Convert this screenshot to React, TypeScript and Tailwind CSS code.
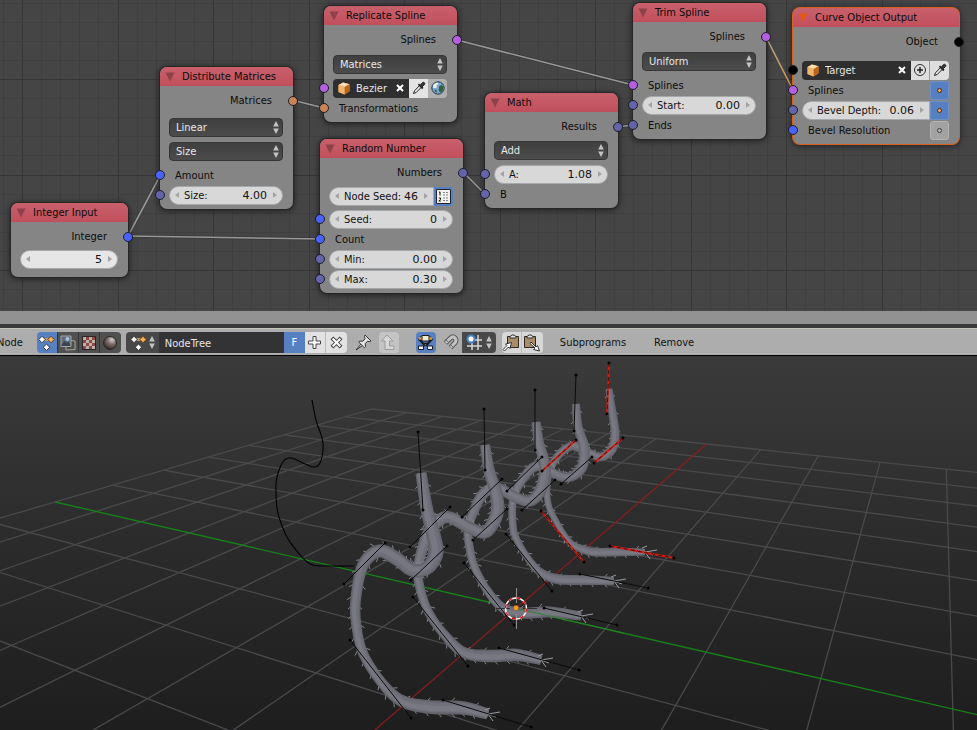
import { useId, type ReactNode } from "react";

/* ------------------------------------------------------------------ */
/* Node editor                                                         */
/* ------------------------------------------------------------------ */

type SocketKind = "integer" | "float" | "spline" | "matrix" | "object";

const SOCKET_COLORS: Record<SocketKind, string> = {
  integer: "bg-[#4a63ff]",
  float: "bg-[#6464aa]",
  spline: "bg-[#b45fe0]",
  matrix: "bg-[#c98355]",
  object: "bg-black",
};

function Socket({ kind, side }: { kind: SocketKind; side: "left" | "right" }) {
  return (
    <span
      className={`absolute top-1/2 z-10 size-[10px] -translate-y-1/2 rounded-full border border-[#1c1c24] ${
        side === "left" ? "-left-[5px]" : "-right-[5px]"
      } ${SOCKET_COLORS[kind]}`}
    />
  );
}

function Node({
  title,
  place,
  selected = false,
  children,
}: {
  title: string;
  place: string;
  selected?: boolean;
  children: ReactNode;
}) {
  return (
    <section
      className={`absolute flex flex-col rounded-[7px] bg-[#858585] pb-1 shadow-[0_1px_6px_1px_rgba(0,0,0,0.55)] ring-1 ${
        selected ? "ring-[#d9601f]" : "ring-[#262626]"
      } ${place}`}
    >
      <header className="flex h-[19px] items-center gap-[7px] rounded-t-[7px] bg-linear-to-b from-[#c8606b] to-[#c04f5c] pt-px pl-[5px]">
        <svg viewBox="0 0 10 10" className={`size-[10px] ${selected ? "fill-[#e4571c]" : "fill-[#8e4149]"}`}>
          <path d="M0.5 0.5h9L5 9.5z" />
        </svg>
        <h2>{title}</h2>
      </header>
      <div className="flex flex-col pt-[5px]">{children}</div>
    </section>
  );
}

function Output({ label, kind }: { label: string; kind: SocketKind }) {
  return (
    <div className="relative flex h-5 items-center justify-end pr-[21px]">
      {label}
      <Socket kind={kind} side="right" />
    </div>
  );
}

function Row({ kind, gap = "", children }: { kind?: SocketKind; gap?: string; children: ReactNode }) {
  return (
    <div className={`relative flex h-5 items-center pr-[10px] pl-[9px] ${gap}`}>
      {kind && <Socket kind={kind} side="left" />}
      {children}
    </div>
  );
}

function Plain({ children }: { children: ReactNode }) {
  return <span className="grow pt-[2px] pl-[6px]">{children}</span>;
}

function UpDown() {
  return (
    <svg viewBox="0 0 6 13" className="pointer-events-none h-[13px] w-[6px] fill-[#c4c4c4]">
      <path d="M3 0l2.8 5.5H.2zM3 13L.2 7.5h5.6z" />
    </svg>
  );
}

function Choice({ name, value }: { name: string; value: string }) {
  return (
    <label className="relative flex h-[19px] w-full items-center rounded-[4px] border border-[#363636] bg-linear-to-b from-[#3f3f3f] to-[#4c4c4c] text-[#e9e9e9]">
      <select aria-label={name} defaultValue={value} className="w-full appearance-none pt-[2px] pl-[6px] outline-none">
        <option>{value}</option>
      </select>
      <span className="absolute right-[3px]">
        <UpDown />
      </span>
    </label>
  );
}

function NumberField({
  label,
  value,
  name,
  tone = "bg-[#d8d8d8]",
  joined = false,
}: {
  label?: string;
  value: string;
  name?: string;
  tone?: string;
  joined?: boolean;
}) {
  const id = useId();
  return (
    <div
      className={`flex h-[19px] min-w-0 grow items-center border border-[#a5a9ab] px-[5px] text-[#111] ${tone} ${
        joined ? "rounded-l-full" : "rounded-full"
      }`}
    >
      <svg viewBox="0 0 4 6" className="h-[6px] w-[4px] shrink-0 fill-[#a3a3a3]">
        <path d="M4 0v6L0 3z" />
      </svg>
      {label && (
        <label htmlFor={id} className="shrink-0 pt-px pl-[5px]">
          {label}
        </label>
      )}
      <input
        id={id}
        aria-label={name}
        defaultValue={value}
        className="w-0 min-w-0 grow bg-transparent pt-[2px] pr-[6px] text-right font-['DejaVu_Sans',sans-serif] outline-none"
      />
      <svg viewBox="0 0 4 6" className="h-[6px] w-[4px] shrink-0 fill-[#a3a3a3]">
        <path d="M0 0v6l4-3z" />
      </svg>
    </div>
  );
}

function CubeIcon() {
  return (
    <svg viewBox="0 0 12 13" className="h-[13px] w-[12px] shrink-0">
      <path d="M.5 3L5 .5l6.5 1.8v7L6.5 12.5.5 10z" fill="#e9953f" />
      <path d="M.5 3L5 .5l6.5 1.8-5 2.7z" fill="#fbe0b4" />
      <path d="M6.5 5l5-2.7v7l-5 3.2z" fill="#b9651d" />
      <path d="M.5 3l6 2v7.5L.5 10z" fill="#f0b46f" />
    </svg>
  );
}

function CloseIcon() {
  return (
    <svg viewBox="0 0 8 8" className="size-[8px]">
      <path d="M1 1l6 6M7 1L1 7" stroke="#fff" strokeWidth="2" />
    </svg>
  );
}

function EyedropperIcon() {
  return (
    <svg viewBox="0 0 14 14" className="size-[14px]" fill="none">
      <path d="M1.500 12.500l1-2.700 5-5.200 1.800 1.700-5.100 5.200z" fill="#e8e8e8" stroke="#222" />
      <path d="M6.500 3.200l4.300 4.300" stroke="#222" strokeWidth="1.800" />
      <path d="M8.500 5.500L8 4.500 10.300 1.800c.8-.9 1.700-.5 2.100-.1.500.5.700 1.200 0 2L9.800 6z" fill="#3a3a3a" stroke="#222" />
    </svg>
  );
}

function GlobeIcon() {
  return (
    <svg viewBox="0 0 14 14" className="size-[14px]">
      <circle cx="7" cy="7" r="6.2" fill="#7ba4d0" stroke="#26384f" />
      <path d="M2.500 3.500c1.500-1.500 3-2 4.500-1.800l.5 1.600-2 1 .4 1.600-1.800 1.400-2.200-.6z" fill="#e8f0e4" />
      <path d="M8 5.500l2.500-1.800 2 2.500-.8 3.500-2.500 2-1.500-2.500z" fill="#33623a" />
      <path d="M3.500 8.500l2 .6.2 2.700-1.500-.8z" fill="#33623a" />
    </svg>
  );
}

function ObjectField({ value, name }: { value: string; name: string }) {
  return (
    <div className="flex h-[19px] min-w-0 grow items-center rounded-l-[4px] bg-[#2f2f2f] pr-[5px] pl-[5px] text-[#e6e6e6]">
      <CubeIcon />
      <input
        aria-label={name}
        defaultValue={value}
        className="w-0 min-w-0 grow bg-transparent pt-[2px] pl-[6px] outline-none"
      />
      <button aria-label={`Clear ${name}`}>
        <CloseIcon />
      </button>
    </div>
  );
}

function SquareButton({ label, look, children }: { label: string; look: string; children: ReactNode }) {
  return (
    <button aria-label={label} className={`flex h-[19px] w-[19px] shrink-0 items-center justify-center ${look}`}>
      {children}
    </button>
  );
}

function DotToggle({ label, on, round = "rounded-[3px]" }: { label: string; on: boolean; round?: string }) {
  return (
    <SquareButton
      label={label}
      look={`${round} border ${on ? "border-[#6d8fc4] bg-[#5680c2]" : "border-[#b4b4b4] bg-[#a2a2a2]"}`}
    >
      <span
        className={`size-[5px] rounded-full border ${on ? "border-[#4a2c12] bg-[#f0a860]" : "border-[#3c3c3c] bg-[#b8b8b8]"}`}
      />
    </SquareButton>
  );
}

const gridLine = (i: number, start: number) => ({ at: Math.round(start + i * 19.1) + 0.5, major: i % 5 === 0 });
const GRID_X = Array.from({ length: 120 }, (_, i) => gridLine(i - 1, 22));
const GRID_Y = Array.from({ length: 22 }, (_, i) => gridLine(i - 5, 79));

const LINKS = [
  "M457 40L633 85",
  "M292 100L324 108",
  "M128 236L160 176",
  "M128 236L321 239",
  "M463 172L485 194",
  "M617 127L633 125",
];

function NodeCanvas() {
  return (
    <main className="relative h-[311px] shrink-0 overflow-hidden bg-[#454545]">
      <svg className="absolute inset-0 size-full" fill="none">
        {GRID_X.map((l) => (
          <path key={l.at} d={`M${l.at} 0V330`} stroke={l.major ? "#363636" : "#3f3f41"} />
        ))}
        {GRID_Y.map((l) => (
          <path key={l.at} d={`M0 ${l.at}H2400`} stroke={l.major ? "#363636" : "#3f3f41"} />
        ))}
        {LINKS.map((d) => (
          <g key={d}>
            <path d={d} stroke="#2c2c2c" strokeWidth="3" opacity="0.5" />
            <path d={d} stroke="#989898" strokeWidth="1.600" />
          </g>
        ))}
        <linearGradient id="active-link" x1="0" y1="0" x2="0" y2="1">
          <stop offset="0" stopColor="#b4a898" />
          <stop offset="1" stopColor="#d99740" />
        </linearGradient>
        <path d="M766 37L793 90" stroke="url(#active-link)" strokeWidth="1.600" />
      </svg>

      <Node title="Integer Input" place="left-[11px] top-[203px] w-[117px] pb-[8px]">
        <Output label="Integer" kind="integer" />
        <Row gap="mt-[2px]">
          <NumberField name="Integer" value="5" tone="bg-[#e6e6e6]" />
        </Row>
      </Node>

      <Node title="Distribute Matrices" place="left-[160px] top-[67px] w-[133px]">
        <Output label="Matrices" kind="matrix" />
        <Row gap="mt-[6px]">
          <Choice name="Distribution" value="Linear" />
        </Row>
        <Row gap="mt-[4px]">
          <Choice name="Mode" value="Size" />
        </Row>
        <Row kind="integer" gap="mt-[4px]">
          <Plain>Amount</Plain>
        </Row>
        <Row kind="float">
          <NumberField label="Size:" value="4.00" />
        </Row>
      </Node>

      <Node title="Replicate Spline" place="left-[324px] top-[6px] w-[133px]">
        <Output label="Splines" kind="spline" />
        <Row gap="mt-[4px]">
          <Choice name="Replicate by" value="Matrices" />
        </Row>
        <Row kind="spline" gap="mt-[4px]">
          <ObjectField name="Spline object" value="Bezier" />
          <SquareButton label="Pick object" look="bg-[#e4e4e4]">
            <EyedropperIcon />
          </SquareButton>
          <SquareButton label="World space" look="rounded-r-[4px] bg-[#b0b0b0]">
            <GlobeIcon />
          </SquareButton>
        </Row>
        <Row kind="matrix">
          <Plain>Transformations</Plain>
        </Row>
      </Node>

      <Node title="Random Number" place="left-[320px] top-[139px] w-[143px]">
        <Output label="Numbers" kind="float" />
        <Row gap="mt-[3px]">
          <NumberField label="Node Seed:" value="46" joined />
          <SquareButton label="Create list" look="rounded-r-[3px] bg-[#5680c2]">
            <svg viewBox="0 0 15 15" className="size-[15px]">
              <path d="M.5.5h14v14H.5z" fill="#f2f2ee" stroke="#222" />
              <path d="M3 3.500l1-.7V6.500M2.800 9h1.700v1.500L2.800 12h2" stroke="#111" fill="none" />
              <path d="M7 3.500h6M7 6h6M7 9h6M7 11.500h6" stroke="#888" strokeDasharray="2 1" />
            </svg>
          </SquareButton>
        </Row>
        <Row kind="integer" gap="mt-[3px]">
          <NumberField label="Seed:" value="0" />
        </Row>
        <Row kind="integer">
          <Plain>Count</Plain>
        </Row>
        <Row kind="float">
          <NumberField label="Min:" value="0.00" />
        </Row>
        <Row kind="float">
          <NumberField label="Max:" value="0.30" />
        </Row>
      </Node>

      <Node title="Math" place="left-[485px] top-[93px] w-[133px]">
        <Output label="Results" kind="float" />
        <Row gap="mt-[3px]">
          <Choice name="Operation" value="Add" />
        </Row>
        <Row kind="float" gap="mt-[4px]">
          <NumberField label="A:" value="1.08" />
        </Row>
        <Row kind="float">
          <Plain>B</Plain>
        </Row>
      </Node>

      <Node title="Trim Spline" place="left-[633px] top-[3px] w-[133px]">
        <Output label="Splines" kind="spline" />
        <Row gap="mt-[4px]">
          <Choice name="Parameter type" value="Uniform" />
        </Row>
        <Row kind="spline" gap="mt-[4px]">
          <Plain>Splines</Plain>
        </Row>
        <Row kind="float">
          <NumberField label="Start:" value="0.00" />
        </Row>
        <Row kind="float">
          <Plain>Ends</Plain>
        </Row>
      </Node>

      <Node title="Curve Object Output" place="left-[793px] top-[8px] w-[166px]" selected>
        <Output label="Object" kind="object" />
        <Row kind="object" gap="mt-[8px]">
          <ObjectField name="Target object" value="Target" />
          <SquareButton label="Add target" look="border-r border-[#999] bg-[#dedede]">
            <svg viewBox="0 0 14 14" className="size-[14px]" fill="none">
              <circle cx="7" cy="7" r="5.500" stroke="#333" />
              <path d="M7 4v6M4 7h6" stroke="#222" strokeWidth="1.500" />
            </svg>
          </SquareButton>
          <SquareButton label="Pick target" look="rounded-r-[4px] bg-[#dedede]">
            <EyedropperIcon />
          </SquareButton>
        </Row>
        <Row kind="spline">
          <Plain>Splines</Plain>
          <DotToggle label="Use splines" on />
        </Row>
        <Row kind="float">
          <NumberField label="Bevel Depth:" value="0.06" joined />
          <DotToggle label="Use bevel depth" on round="rounded-r-[3px]" />
        </Row>
        <Row kind="integer">
          <Plain>Bevel Resolution</Plain>
          <DotToggle label="Use bevel resolution" on={false} />
        </Row>
      </Node>
    </main>
  );
}

/* ------------------------------------------------------------------ */
/* Editor header                                                       */
/* ------------------------------------------------------------------ */

function NodesIcon() {
  return (
    <svg viewBox="0 0 17 16" className="h-[16px] w-[17px]">
      <path d="M5 4.500h6" stroke="#b89860" strokeWidth="3" />
      <path d="M4 1.200L7.200 4.500 4 7.800.8 4.500z" fill="#fff" stroke="#33363d" />
      <path d="M13 1.200l3.200 3.300L13 7.800 9.800 4.500z" fill="#f5b062" stroke="#70400f" />
      <path d="M8.500 9l3.200 3.200-3.200 3.300-3.200-3.300z" fill="#fff" stroke="#33363d" />
    </svg>
  );
}

function ImagesIcon() {
  return (
    <svg viewBox="0 0 16 16" className="size-[16px]">
      <path d="M6 5l9 1v8.500l-9 .5z" fill="#4a4e48" stroke="#a9a99d" />
      <path d="M1 1h10v10.500H1z" fill="#5f6b78" stroke="#a2a8ac" />
      <path d="M1.500 10l3-4 2 2 2-1.500 2 4.500h-9z" fill="#39434e" />
      <circle cx="7.500" cy="4" r="2" fill="#a9c2de" />
    </svg>
  );
}

function CheckerIcon() {
  const cells = [0, 1, 2, 3].flatMap((r) => [0, 1, 2, 3].map((c) => ({ r, c })));
  return (
    <svg viewBox="0 0 14 14" className="size-[14px]">
      <rect width="14" height="14" fill="#2c2424" />
      {cells.map(({ r, c }) => (
        <rect key={`${r}${c}`} x={1 + c * 3} y={1 + r * 3} width="3" height="3" fill={(r + c) % 2 ? "#8e4a42" : "#b9b0ac"} />
      ))}
    </svg>
  );
}

function SphereIcon() {
  return (
    <svg viewBox="0 0 16 16" className="size-[16px]">
      <radialGradient id="sphere" cx="0.65" cy="0.25" r="0.8">
        <stop offset="0" stopColor="#d0d0d0" />
        <stop offset="0.45" stopColor="#7d6a66" />
        <stop offset="1" stopColor="#2a2424" />
      </radialGradient>
      <circle cx="8" cy="8" r="6.500" fill="url(#sphere)" stroke="#2a2727" />
    </svg>
  );
}

function PinIcon() {
  return (
    <svg viewBox="0 0 17 17" className="size-[17px]">
      <path d="M1 16l5-6 1.500 1.500z" fill="#eee" stroke="#333" />
      <path d="M10 1l6 6-1.700.7-1.800-.5-2.200 2.500.3 3-1.200 1L3.800 8.200l1-1.200 3 .3L10 4.800 9.500 2.500z" fill="#e2e2e2" stroke="#333" />
    </svg>
  );
}

function ParentIcon() {
  return (
    <svg viewBox="0 0 17 17" className="size-[17px]">
      <path d="M7 1l6 6H9.500v5H14v3.500H5V7H1.500z" fill="#d8d8d8" stroke="#9a9a9a" />
    </svg>
  );
}

function BackdropIcon() {
  return (
    <svg viewBox="0 0 17 17" className="size-[17px]" fill="none">
      <path d="M1.500 5l6.500 7M15.500 5L9 12" stroke="#16181c" strokeWidth="1.600" />
      <path d="M3.500 2.500v4l3 3h4l3-3v-4" stroke="#16181c" strokeWidth="1.400" />
      <path d="M5 1.500h7V7H5z" fill="#f5ead0" stroke="#1a1a1a" />
      <path d="M2 4.500h2.500M12.500 4.500H15" stroke="#e49a3a" strokeWidth="2.500" />
      <path d="M1.500 12h5v3.500h-5zM10.500 12h5v3.500h-5z" fill="#f4f4f4" stroke="#1a1a1a" />
    </svg>
  );
}

function MagnetIcon() {
  return (
    <svg viewBox="0 0 17 17" className="size-[17px]" fill="none">
      <path d="M2.500 9L7.500 4c3-2.700 7 .8 4.700 4.500L7.500 13.500" stroke="#555" strokeWidth="5" />
      <path d="M2.800 8.700L7.500 4c3-2.700 7 .8 4.700 4.500l-4.400 4.700" stroke="#c4c4c4" strokeWidth="3" />
      <path d="M3.200 6l3 3M7.500 10.500l3 3" stroke="#666" />
    </svg>
  );
}

function SnapIcon() {
  return (
    <svg viewBox="0 0 17 17" className="size-[17px]" fill="none">
      <path d="M6 1v15M12 1v15M1 6h15M1 12h15" stroke="#d6d6d6" strokeWidth="1.500" />
      <circle cx="5" cy="5" r="3.500" fill="#fff" stroke="#4b7fd0" strokeWidth="2" />
    </svg>
  );
}

function ClipboardIcon({ paste = false }: { paste?: boolean }) {
  return (
    <svg viewBox="0 0 18 18" className="size-[18px]">
      <g transform={paste ? "translate(0 0)" : "translate(4 0)"}>
        <path d="M1.500 2.500h11v11h-11z" fill="#a98d6a" stroke="#2e2720" />
        <path d="M4 4V2.500L6 1h2l2 1.500V4z" fill="#e4e4e4" stroke="#333" />
      </g>
      {paste ? (
        <path d="M8 8l5 5 1.500-1.500 2 5.500-6-1.500L12 14 7 9.500z" fill="#fff" stroke="#333" />
      ) : (
        <path d="M1 15.500l4-4L3.500 10l6-1.500L8 14.500 6.500 13l-4 4z" fill="#fff" stroke="#333" />
      )}
    </svg>
  );
}

function CrossIcon({ turned = false }: { turned?: boolean }) {
  return (
    <svg viewBox="0 0 15 15" className={`size-[15px] ${turned ? "rotate-45" : ""}`}>
      <path d="M6 1.500h3V6h4.500v3H9v4.500H6V9H1.500V6H6z" fill="#fff" stroke="#444" />
    </svg>
  );
}

function Tool({ label, look, children }: { label: string; look: string; children: ReactNode }) {
  return (
    <button aria-label={label} className={`flex h-[21px] shrink-0 items-center justify-center ${look}`}>
      {children}
    </button>
  );
}

function EditorHeader() {
  return (
    <nav className="flex h-[27px] shrink-0 items-center overflow-hidden border-t border-[#c4c4bc] bg-[#adadad] pt-px text-[#111]">
      <button className="-ml-[3px] shrink-0 pt-px">Node</button>
      <div className="ml-[14px] flex shrink-0 divide-x divide-[#333] overflow-hidden rounded-[4px]">
        <Tool label="Animation nodes" look="w-[21px] bg-[#5680c2]">
          <NodesIcon />
        </Tool>
        <Tool label="Compositing nodes" look="w-[21px] bg-[#505050]">
          <ImagesIcon />
        </Tool>
        <Tool label="Texture nodes" look="w-[21px] bg-[#505050]">
          <CheckerIcon />
        </Tool>
        <Tool label="Shader nodes" look="w-[21px] bg-[#505050]">
          <SphereIcon />
        </Tool>
      </div>
      <div className="ml-[5px] flex shrink-0 overflow-hidden rounded-[4px]">
        <Tool label="Browse node trees" look="w-[33px] gap-[2px] bg-[#484848]">
          <NodesIcon />
          <UpDown />
        </Tool>
        <input
          aria-label="Node tree name"
          defaultValue="NodeTree"
          className="h-[21px] w-[125px] bg-[#333335] pt-px pl-[6px] text-[#e6e6e6] outline-none"
        />
        <Tool label="Fake user" look="w-[21px] bg-[#5680c2] pt-px text-white">
          F
        </Tool>
        <Tool label="Add node tree" look="w-[21px] border-r border-[#bbb] bg-[#e2e2e2]">
          <CrossIcon />
        </Tool>
        <Tool label="Unlink node tree" look="w-[21px] bg-[#e2e2e2]">
          <CrossIcon turned />
        </Tool>
      </div>
      <Tool label="Pin" look="ml-[6px] w-[21px]">
        <PinIcon />
      </Tool>
      <Tool label="Go to parent" look="ml-[5px] w-[20px] rounded-[4px] bg-[#c4c4c4]">
        <ParentIcon />
      </Tool>
      <Tool label="Backdrop" look="ml-[17px] w-[20px] rounded-[4px] bg-[#5680c2]">
        <BackdropIcon />
      </Tool>
      <Tool label="Snap" look="ml-[6px] w-[20px] rounded-l-[4px]">
        <MagnetIcon />
      </Tool>
      <Tool label="Snap element" look="w-[34px] gap-[3px] rounded-r-[4px] bg-[#484848]">
        <SnapIcon />
        <UpDown />
      </Tool>
      <div className="ml-[6px] flex shrink-0 divide-x divide-[#bbb] overflow-hidden rounded-[4px] bg-[#d8d8d8]">
        <Tool label="Copy nodes" look="w-[20px]">
          <ClipboardIcon />
        </Tool>
        <Tool label="Paste nodes" look="w-[21px]">
          <ClipboardIcon paste />
        </Tool>
      </div>
      <button className="ml-[17px] shrink-0 pt-px">Subprograms</button>
      <button className="ml-[28px] shrink-0 pt-px">Remove</button>
    </nav>
  );
}

/* ------------------------------------------------------------------ */
/* 3D viewport                                                         */
/* ------------------------------------------------------------------ */

type Point = [number, number];

/* Camera projection of a floor point: u runs along the green axis, v along the red one. */
const depth = (u: number, v: number) => 1 - 0.05745 * u - 0.102 * v;
const project = (u: number, v: number): Point => [
  (54.46 * u - 95.9 * v + 516) / depth(u, v),
  (-15.55 * u - 24.75 * v + 608.3) / depth(u, v),
];
const segment = (a: Point, b: Point) => `M${a[0]} ${a[1]}L${b[0]} ${b[1]}`;
const NEAR = 0.14;
const alongU = (v: number) => segment(project(-8, v), project(Math.min(8, (1 - NEAR - 0.102 * v) / 0.05745), v));
const alongV = (u: number) => segment(project(u, -8), project(u, Math.min(8, (1 - NEAR - 0.05745 * u) / 0.102)));
const STEPS = Array.from({ length: 17 }, (_, i) => i - 8).filter((n) => n !== 0);

/* Dense samples of a smooth curve that passes through the given points. */
function sample(points: Point[], per = 8): Point[] {
  const out: Point[] = [];
  for (let i = 0; i < points.length - 1; i++) {
    const p0 = points[Math.max(0, i - 1)];
    const p1 = points[i];
    const p2 = points[i + 1];
    const p3 = points[Math.min(points.length - 1, i + 2)];
    for (let k = 0; k < per; k++) {
      const t = k / per;
      const f = (a: number, b: number, c: number, d: number) =>
        0.5 * (2 * b + (c - a) * t + (2 * a - 5 * b + 4 * c - d) * t * t + (3 * b - a - 3 * c + d) * t * t * t);
      out.push([f(p0[0], p1[0], p2[0], p3[0]), f(p0[1], p1[1], p2[1], p3[1])]);
    }
  }
  out.push(points[points.length - 1]);
  return out;
}

const toPath = (points: Point[]) => "M" + points.map((p) => `${p[0].toFixed(1)} ${p[1].toFixed(1)}`).join("L");

function normal(points: Point[], i: number): Point {
  const a = points[Math.max(0, i - 1)];
  const b = points[Math.min(points.length - 1, i + 1)];
  const n = Math.hypot(b[0] - a[0], b[1] - a[1]) || 1;
  return [-(b[1] - a[1]) / n, (b[0] - a[0]) / n];
}

/* Relative thickness of a tentacle from its upright tip to the floor end. */
const PROFILE = [1, 1.15, 1.3, 1.35, 1.2, 1.2, 1.25, 1.15, 1, 0.95, 0.9, 0.9, 1.05, 1.25, 1.25, 1];
const thickness = (t: number) => {
  const x = t * (PROFILE.length - 1);
  const i = Math.min(PROFILE.length - 2, Math.floor(x));
  return PROFILE[i] + (PROFILE[i + 1] - PROFILE[i]) * (x - i);
};

/* Closed band that follows the curve; shift moves it sideways by a share of the width. */
function ribbon(points: Point[], width: number, scale: number, shift = 0) {
  const edge = (side: number) =>
    points.map((p, i): Point => {
      const n = normal(points, i);
      const w = (width * thickness(i / (points.length - 1)) * (scale * side + shift)) / 2;
      return [p[0] + n[0] * w, p[1] + n[1] * w];
    });
  return toPath([...edge(1), ...edge(-1).reverse()]) + "Z";
}

function hairs(points: Point[], width: number) {
  let d = "";
  for (let i = 3; i < points.length - 3; i += 3) {
    const [nx, ny] = normal(points, i);
    const [tx, ty] = [ny, -nx];
    const w = width * thickness(i / (points.length - 1));
    for (const side of [1, -1]) {
      if (side === -1 && i % 2 === 0) continue;
      const reach = width * (0.32 + ((i * 7) % 5) / 22);
      const x = points[i][0] + nx * side * w * 0.4;
      const y = points[i][1] + ny * side * w * 0.4;
      d += `M${x.toFixed(1)} ${y.toFixed(1)}l${(nx * side * reach * 0.8 + tx * reach * 0.7).toFixed(1)} ${(
        ny * side * reach * 0.8 +
        ty * reach * 0.7
      ).toFixed(1)}`;
    }
  }
  return d;
}

const TENTACLES: { width: number; points: Point[] }[] = [
  {
    width: 7,
    points: [[609, 389], [612, 410], [615, 433], [612, 449], [601, 457], [587, 452], [572, 446], [557, 457], [548, 477], [548, 503], [557, 523], [568, 540], [577, 547], [593, 552], [617, 552], [645, 552]],
  },
  {
    width: 8,
    points: [[576, 404], [578, 427], [584, 447], [582, 467], [570, 477], [557, 475], [537, 466], [522, 480], [513, 500], [513, 527], [517, 540], [527, 557], [540, 572], [557, 579], [583, 580], [614, 581]],
  },
  {
    width: 9,
    points: [[536, 422], [539, 443], [545, 467], [541, 489], [530, 501], [515, 497], [497, 488], [483, 494], [473, 513], [468, 530], [470, 550], [475, 568], [487, 590], [503, 608], [523, 613], [550, 612], [581, 616]],
  },
  {
    width: 10,
    points: [[485, 445], [489, 470], [496, 493], [497, 513], [486, 532], [470, 528], [447, 517], [431, 529], [422, 550], [418, 570], [420, 588], [428, 611], [443, 633], [463, 652], [487, 656], [517, 655], [541, 660]],
  },
  {
    width: 11,
    points: [[421, 473], [427, 510], [433, 533], [436, 553], [427, 568], [412, 570], [397, 559], [379, 551], [363, 565], [356, 597], [356, 622], [363, 653], [382, 683], [402, 701], [430, 707], [463, 708], [488, 714]],
  },
];

const HANDLES: [number, number, number, number][] = [
  [418, 432, 423, 510], [385, 543, 344, 584], [447, 546, 411, 580], [350, 640, 411, 718], [443, 700, 531, 727],
  [484, 409, 485, 470], [450, 507, 410, 547], [507, 509, 473, 540], [413, 597, 468, 666], [499, 648, 579, 670],
  [535, 390, 535, 450], [502, 479, 462, 517], [555, 480, 522, 510], [464, 563, 514, 625], [544, 608, 617, 625],
  [576, 375, 574, 431], [542, 457, 507, 491], [592, 457, 561, 484], [506, 534, 552, 591], [580, 574, 648, 588],
];

const ACTIVE_HANDLES: [number, number, number, number][] = [
  [609, 363, 607, 414], [576, 440, 542, 471], [623, 438, 594, 463], [541, 511, 584, 562], [610, 546, 674, 558],
];

const SOURCE_CURVE: Point[] = [
  [312, 400], [316, 420], [322, 438], [323, 450], [320, 463], [314, 467], [305, 464], [291, 458], [283, 462], [277, 477],
  [276, 493], [278, 513], [287, 537], [302, 557], [313, 565], [330, 566], [354, 566],
];

function Tentacle({ width, points }: { width: number; points: Point[] }) {
  const dense = sample(points);
  const [ex, ey] = points[points.length - 1];
  return (
    <g>
      <path d={hairs(dense, width)} stroke="#83848a" />
      <path d={ribbon(dense, width, 1)} fill="#62636b" />
      <path d={ribbon(dense, width, 0.74)} fill="#6e6f78" />
      <path d={ribbon(dense, width, 0.4, 0.15)} fill="#777882" />
      <path d={`M${ex} ${ey}l12 -2M${ex} ${ey}l5 7M${ex} ${ey}l8 3M${ex - 3} ${ey - 4}l5 -2`} stroke="#9b9ca2" />
    </g>
  );
}

function Viewport() {
  return (
    <svg
      role="img"
      aria-label="3D view"
      viewBox="0 356 977 374"
      preserveAspectRatio="xMidYMid slice"
      className="min-h-0 w-full flex-1 border-t border-black"
      fill="none"
    >
      <linearGradient id="backdrop" x1="0" y1="0" x2="0" y2="1">
        <stop offset="0" stopColor="#3b3b3c" />
        <stop offset="0.5" stopColor="#2b2b2b" />
        <stop offset="1" stopColor="#1d1d1d" />
      </linearGradient>
      <rect x="0" y="350" width="977" height="390" fill="url(#backdrop)" />
      <g stroke="#4a4a4d" strokeWidth="1.300">
        {STEPS.map((n) => (
          <path key={n} d={alongU(n) + alongV(n)} />
        ))}
      </g>
      <path d={alongV(0)} stroke="#8c1d1d" strokeWidth="1.200" />
      <path d={alongU(0)} stroke="#178117" strokeWidth="1.400" />
      <path d={toPath(sample(SOURCE_CURVE))} stroke="#000" strokeWidth="1.100" />
      {TENTACLES.map((t) => (
        <Tentacle key={t.width} {...t} />
      ))}
      {HANDLES.map(([x1, y1, x2, y2]) => (
        <g key={`${x1}-${y1}`}>
          <path d={`M${x1} ${y1}L${x2} ${y2}`} stroke="#0a0a0a" />
          <circle cx={x1} cy={y1} r="1.500" fill="#000" />
          <circle cx={x2} cy={y2} r="1.500" fill="#000" />
        </g>
      ))}
      {ACTIVE_HANDLES.map(([x1, y1, x2, y2]) => (
        <g key={`${x1}-${y1}`}>
          <path d={`M${x1} ${y1}L${x2} ${y2}`} stroke="#d81a10" strokeWidth="1.800" />
          <path d={`M${x1} ${y1}L${x2} ${y2}`} stroke="#240808" strokeWidth="0.800" strokeDasharray="4 3" />
          <circle cx={x1} cy={y1} r="1.500" fill="#000" />
          <circle cx={x2} cy={y2} r="1.500" fill="#000" />
        </g>
      ))}
      <path d={segment(project(0, 0), project(1.2, 0))} stroke="#2b7f2b" opacity="0.8" />
      <g>
        <path d="M516.500 588v15M516.500 614v15" stroke="#8e8e8e" />
        <path d="M496 608.500h14M523 608.500h14" stroke="#2e2e2e" />
        <circle cx="516" cy="608.500" r="10.500" stroke="#fff" strokeWidth="1.300" />
        <circle cx="516" cy="608.500" r="10.500" stroke="#e01010" strokeWidth="1.300" strokeDasharray="4.120 4.120" />
        <circle cx="516" cy="608" r="2.700" fill="#f0a030" stroke="#7a4a10" strokeWidth="0.600" />
      </g>
    </svg>
  );
}

export default function App() {
  return (
    <div className="flex h-screen flex-col overflow-hidden bg-[#3a3a3a] font-['DejaVu_Sans_Condensed','DejaVu_Sans',sans-serif] text-[11px] leading-[14px] text-[#0c0c0c]">
      <NodeCanvas />
      <hr className="mb-1 h-[13px] shrink-0 border-0 bg-[#929292]" />
      <EditorHeader />
      <Viewport />
    </div>
  );
}
